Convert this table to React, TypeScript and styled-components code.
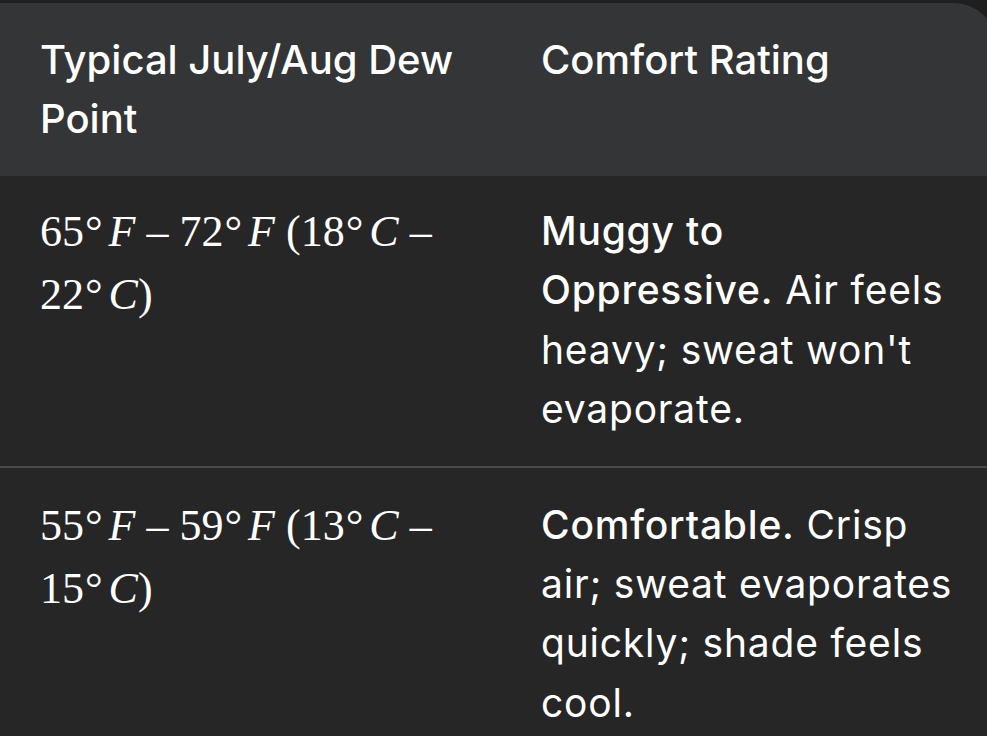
import React from "react";
import styled, { createGlobalStyle } from "styled-components";

const Global = createGlobalStyle`
  html, body { margin: 0; padding: 0; background: #1f1f1f; }
  body { width: 987px; height: 736px; overflow: hidden; }
`;

const Table = styled.div`
  margin-top: 3px;
  width: 996px;
  background: #262626;
  border-top-right-radius: 42px;
  overflow: hidden;
  display: grid;
  grid-template-columns: 501px 495px;
`;

const HeadCell = styled.div`
  background: #333537;
  color: #ffffff;
  font-family: Inter, "Noto Sans", sans-serif;
  font-weight: 500;
  font-size: 40px;
  line-height: 59px;
  padding: 27px 40px 0 40px;
  height: 173px;
  box-sizing: border-box;
`;

const Cell = styled.div<{ $divider?: boolean }>`
  padding: ${(p) => (p.$divider ? "27px" : "25px")} 35px 27px 40px;
  border-top: ${(p) => (p.$divider ? "2px solid #4a4a4a" : "none")};
  color: #ffffff;
  box-sizing: border-box;
`;

const MathText = styled.div`
  font-family: "Liberation Serif", "Times New Roman", serif;
  font-size: 44px;
  line-height: 63px;
  margin-top: -1px;
`;

const Deg = styled.span`
  margin-left: 1px;
  margin-right: 6px;
`;

const Var = styled.i`
  font-style: italic;
`;

const Op = styled.span`
  margin: 0 11px;
`;

const Prose = styled.div`
  font-family: Inter, "Noto Sans", sans-serif;
  font-size: 39px;
  line-height: 59.4px;
  letter-spacing: 0.8px;
  font-weight: 400;
`;

const Strong = styled.span`
  font-weight: 500;
`;

function Temp({ n, unit }: { n: string; unit: string }) {
  return (
    <>
      {n}
      <Deg>°</Deg>
      <Var>{unit}</Var>
    </>
  );
}

function Range({ a, b, c, d }: { a: string; b: string; c: string; d: string }) {
  return (
    <MathText>
      <Temp n={a} unit="F" />
      <Op>–</Op>
      <Temp n={b} unit="F" /> (<Temp n={c} unit="C" />
      <Op>–</Op>
      <Temp n={d} unit="C" />)
    </MathText>
  );
}

export default function App() {
  return (
    <>
      <Global />
      <Table>
        <HeadCell>Typical July/Aug Dew Point</HeadCell>
        <HeadCell>Comfort Rating</HeadCell>
        <Cell>
          <Range a="65" b="72" c="18" d="22" />
        </Cell>
        <Cell>
          <Prose>
            <Strong>Muggy to Oppressive.</Strong> Air feels heavy; sweat won't evaporate.
          </Prose>
        </Cell>
        <Cell $divider>
          <Range a="55" b="59" c="13" d="15" />
        </Cell>
        <Cell $divider>
          <Prose>
            <Strong>Comfortable.</Strong> Crisp air; sweat evaporates quickly; shade feels cool.
          </Prose>
        </Cell>
      </Table>
    </>
  );
}
